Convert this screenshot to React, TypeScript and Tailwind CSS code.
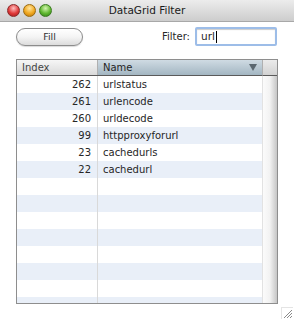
import React from 'react';

const rows = [
  { index: 262, name: 'urlstatus' },
  { index: 261, name: 'urlencode' },
  { index: 260, name: 'urldecode' },
  { index: 99, name: 'httpproxyforurl' },
  { index: 23, name: 'cachedurls' },
  { index: 22, name: 'cachedurl' },
];

const font = { fontFamily: '"DejaVu Sans", "Lucida Grande", sans-serif' };

function TrafficLights() {
  return (
    <div className="flex items-center gap-[3px]">
      <span className="w-[13px] h-[13px] rounded-full border border-[#8a2a2a] bg-[radial-gradient(circle_at_50%_30%,#ffc0c0,#e03a3a_55%,#a01818)]" />
      <span className="w-[13px] h-[13px] rounded-full border border-[#9a6a10] bg-[radial-gradient(circle_at_50%_30%,#ffe6a0,#f0a820_55%,#b87008)]" />
      <span className="w-[13px] h-[13px] rounded-full border border-[#3a7a20] bg-[radial-gradient(circle_at_50%_30%,#d4f5b0,#60b830_55%,#2e7a14)]" />
    </div>
  );
}

function App() {
  // fill the empty space below the data with striped rows
  const filler = Array.from({ length: 10 }, (_, i) => i);

  return (
    <div className="w-[294px] h-[320px] bg-white flex flex-col overflow-hidden text-[#262626]" style={font}>
      {/* title bar */}
      <div className="relative h-[22px] flex items-center px-[7px] bg-linear-to-b from-[#ececec] to-[#cdcdcd] border-b border-[#a8a8a8]">
        <TrafficLights />
        <span className="absolute left-0 right-0 text-center text-[10.5px] leading-none text-[#1a1a1a] pointer-events-none">DataGrid Filter</span>
      </div>

      {/* toolbar */}
      <div className="flex items-center justify-between pl-[16px] pr-[17px] mt-[5px] h-[19px]">
        <button className="w-[67px] h-[18px] rounded-full border border-[#8c8c8c] bg-linear-to-b from-white via-[#f4f4f4] to-[#dcdcdc] text-[9.5px] leading-none text-[#333] shadow-[0_1px_1px_rgba(0,0,0,0.15)]">
          Fill
        </button>
        <div className="flex items-center gap-[5px]">
          <span className="text-[10px] leading-none">Filter:</span>
          <div className="w-[82px] h-[19px] border-2 border-[#9dbde8] rounded-[2px] flex items-center pl-[4px] bg-white shadow-[inset_0_1px_1px_rgba(0,0,0,0.2)]">
            <span className="text-[10.5px] leading-none">url</span>
            <span className="w-px h-[12px] bg-black ml-px" />
          </div>
        </div>
      </div>

      {/* grid */}
      <div className="ml-[16px] mt-[13px] w-[262px] h-[245px] border border-[#8e8e8e] flex overflow-hidden">
        <div className="flex-1 flex flex-col">
          <div className="h-[16px] flex border-b border-[#5a5a5a] text-[10px] leading-none">
            <div className="w-[81px] flex items-center pl-[5px] bg-linear-to-b from-[#f6f6f6] to-[#dadada] border-r border-[#b0b0b0] text-[#444]">Index</div>
            <div className="flex-1 flex items-center justify-between pl-[5px] pr-[5px] bg-linear-to-b from-[#cfdbe3] to-[#a3b6c2]">
              <span>Name</span>
              <svg width="8" height="7" viewBox="0 0 8 7">
                <path d="M0 0h8L4 7z" fill="#5a6770" />
              </svg>
            </div>
          </div>
          <div className="flex-1 flex flex-col overflow-hidden text-[10px] leading-none">
            {rows.map((r, i) => (
              <div key={r.index} className={`h-[17px] shrink-0 flex ${i % 2 ? 'bg-[#e9eff8]' : 'bg-white'}`}>
                <div className="w-[81px] flex items-center justify-end pr-[6px] border-r border-[#d9d9d9]">{r.index}</div>
                <div className="flex-1 flex items-center pl-[5px]">{r.name}</div>
              </div>
            ))}
            {filler.map((i) => (
              <div key={i} className={`h-[17px] shrink-0 flex ${i % 2 ? 'bg-[#e9eff8]' : 'bg-white'}`}>
                <div className="w-[81px] border-r border-[#d9d9d9]" />
                <div className="flex-1" />
              </div>
            ))}
          </div>
        </div>
        <div className="w-[15px] flex flex-col">
          <div className="h-[16px] bg-linear-to-b from-[#ebebeb] to-[#d2d2d2] border-b border-[#5a5a5a] border-l border-l-[#b0b0b0]" />
          <div className="flex-1 border-l border-[#e2e2e2] bg-linear-to-r from-[#fbfbfb] via-[#f2f2f2] to-[#c6c6c6]" />
        </div>
      </div>

      {/* resize grip */}
      <div className="flex-1 flex items-end justify-end pr-[1px] pb-[1px]">
        <div className="w-[12px] h-[12px] border-t border-l border-[#e4e4e4] flex items-end justify-end">
          <svg width="11" height="11" viewBox="0 0 11 11">
            <path d="M10 2L2 10M10 5L5 10M10 8L8 10" stroke="#8a8a8a" strokeWidth="1" />
          </svg>
        </div>
      </div>
    </div>
  );
}

export default App;
